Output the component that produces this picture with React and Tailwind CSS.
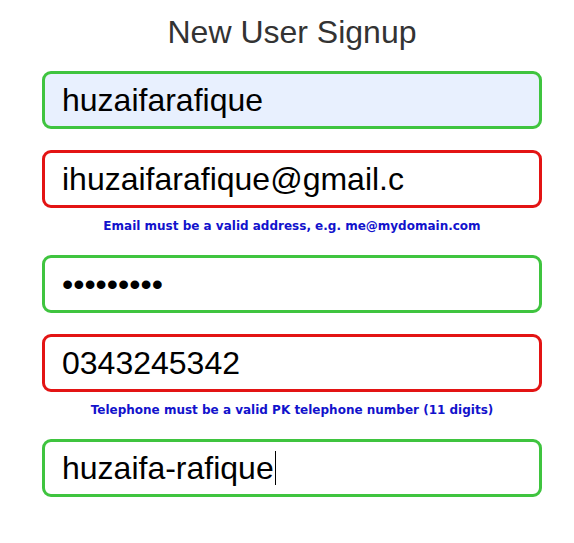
import React from "react";

const font = { fontFamily: '"Liberation Sans", Arial, sans-serif' };
const errFont = { fontFamily: '"DejaVu Sans", Verdana, sans-serif' };

function Field({ value, color, bg = "bg-white", type = "text" }) {
  return (
    <input
      readOnly
      type={type}
      value={value}
      className={`block h-[58px] w-full rounded-[9px] border-[3px] ${color} ${bg} px-[17px] text-[32px] leading-[37px] text-black outline-none`}
      style={font}
    />
  );
}

function Err({ children }) {
  return (
    <p
      className="mt-[10px] text-center text-[12px] font-bold leading-[16px] text-[#1212cc]"
      style={errFont}
    >
      {children}
    </p>
  );
}

export default function App() {
  return (
    <div className="min-h-[543px] w-[574px] bg-white" style={font}>
      <div className="ml-[42px] w-[500px] pt-[14px]">
        <h1 className="text-center text-[32px] font-normal leading-[37px] text-[#333333]">
          New User Signup
        </h1>
        <div className="mt-[20px] flex flex-col gap-[21px]">
          <Field value="huzaifarafique" color="border-[#3fc43f]" bg="bg-[#e8f0fe]" />
          <div>
            <Field value="ihuzaifarafique@gmail.c" color="border-[#e31414]" />
            <Err>Email must be a valid address, e.g. me@mydomain.com</Err>
          </div>
          <Field value="123456789" type="password" color="border-[#3fc43f]" />
          <div>
            <Field value="0343245342" color="border-[#e31414]" />
            <Err>Telephone must be a valid PK telephone number (11 digits)</Err>
          </div>
          <div className="flex h-[58px] w-full items-center rounded-[9px] border-[3px] border-[#3fc43f] bg-white px-[17px] text-[32px] leading-[37px] text-black">
            <span>huzaifa-rafique</span>
            <span className="ml-[1px] inline-block h-[34px] w-[1px] bg-black" />
          </div>
        </div>
      </div>
    </div>
  );
}
